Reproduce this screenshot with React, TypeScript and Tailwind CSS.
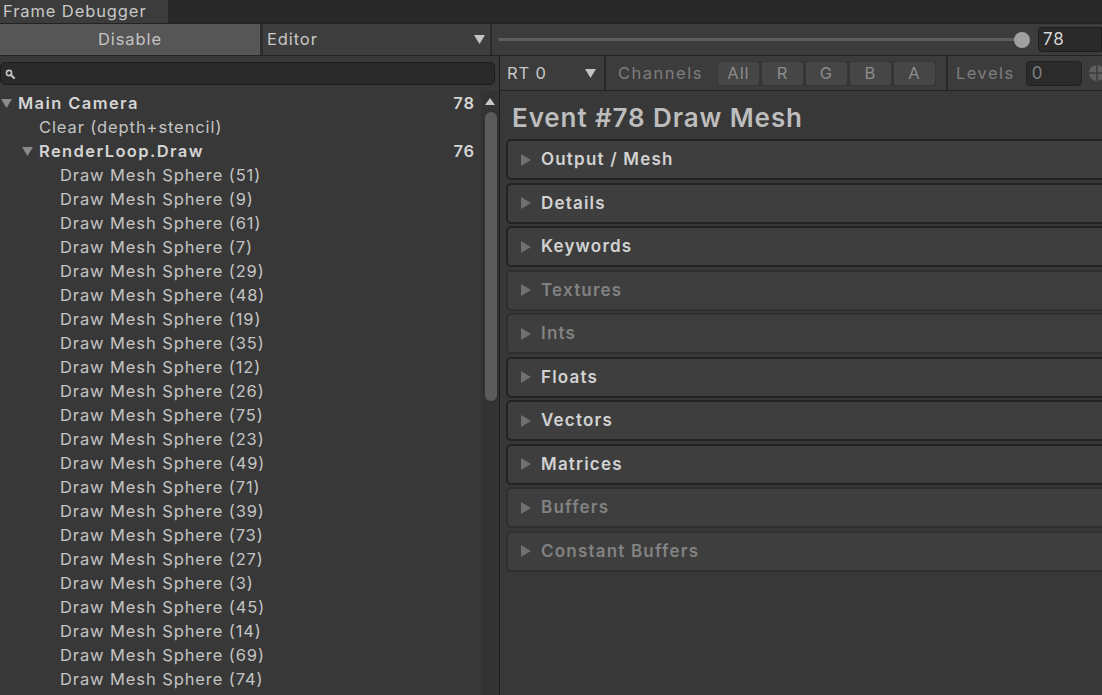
import React from 'react';

const spheres = [51, 9, 61, 7, 29, 48, 19, 35, 12, 26, 75, 23, 49, 71, 39, 73, 27, 3, 45, 14, 69, 74];

const foldouts = [
  { label: 'Output / Mesh', enabled: true },
  { label: 'Details', enabled: true },
  { label: 'Keywords', enabled: true },
  { label: 'Textures', enabled: false },
  { label: 'Ints', enabled: false },
  { label: 'Floats', enabled: true },
  { label: 'Vectors', enabled: true },
  { label: 'Matrices', enabled: true },
  { label: 'Buffers', enabled: false },
  { label: 'Constant Buffers', enabled: false },
];

function DownTri({ className }: { className?: string }) {
  return (
    <svg width="11" height="9" viewBox="0 0 11 9" className={className}>
      <path d="M0 0 H11 L5.5 9 Z" fill="currentColor" />
    </svg>
  );
}

function RightTri({ className }: { className?: string }) {
  return (
    <svg width="10" height="12" viewBox="0 0 10 12" className={className}>
      <path d="M0 0 L10 6 L0 12 Z" fill="currentColor" />
    </svg>
  );
}

function TreeRow({ indent, label, count, bold, open }: { indent: number; label: string; count?: number; bold?: boolean; open?: boolean }) {
  return (
    <div className="h-[24px] flex items-center pr-[6px]">
      <div style={{ width: indent }} className="shrink-0 flex justify-end pr-[6px]">
        {open && <DownTri className="text-[#8a8a8a]" />}
      </div>
      <span className={bold ? 'font-semibold text-[#d4d4d4] tracking-[1.4px]' : 'text-[#c4c4c4]'}>{label}</span>
      {count !== undefined && <span className="ml-auto font-semibold text-[#d4d4d4]">{count}</span>}
    </div>
  );
}

export default function App() {
  return (
    <div className="w-[1102px] h-[695px] bg-[#383838] flex flex-col overflow-hidden font-['Inter',sans-serif] text-[16.5px] tracking-[0.9px] leading-none text-[#c4c4c4]">
      {/* tab strip */}
      <div className="h-[23px] bg-[#282828] flex shrink-0">
        <div className="w-[168px] bg-[#3c3c3c] flex items-center pl-[3px] text-[#c8c8c8]">Frame Debugger</div>
      </div>

      {/* toolbar */}
      <div className="h-[33px] bg-[#3c3c3c] border-t border-b border-[#232323] flex items-stretch shrink-0">
        <div className="w-[263px] bg-[#565656] flex items-center justify-center text-[#c4c4c4] border-r-[3px] border-[#2e2e2e]">Disable</div>
        <div className="w-[229px] bg-[#3e3e3e] flex items-center justify-between pl-[4px] pr-[5px] border-r-2 border-[#2a2a2a]">
          <span className="text-[#c8c8c8]">Editor</span>
          <DownTri className="text-[#c4c4c4]" />
        </div>
        <div className="flex-1 flex items-center pl-[6px] pr-[8px]">
          <div className="flex-1 h-[3px] bg-[#5e5e5e] rounded-full" />
          <div className="w-[16px] h-[16px] rounded-full bg-[#a0a0a0] -ml-[8px]" />
        </div>
        <div className="w-[64px] my-[3px] bg-[#2a2a2a] border border-[#1e1e1e] rounded-l-[4px] flex items-center pl-[4px] text-[#d4d4d4] text-[17px]">78</div>
      </div>

      <div className="flex-1 flex min-h-0">
        {/* left panel */}
        <div className="w-[499px] flex flex-col shrink-0">
          <div className="h-[35px] flex items-center pr-[4px] shrink-0">
            <div className="w-full h-[23px] bg-[#2a2a2a] border border-[#1d1d1d] rounded-[5px] flex items-center pl-[4px]">
              <svg width="10" height="10" viewBox="0 0 10 10">
                <circle cx="4" cy="4" r="2.6" stroke="#c4c4c4" strokeWidth="1.6" fill="none" />
                <path d="M6 6 L9 9" stroke="#c4c4c4" strokeWidth="2" strokeLinecap="round" />
              </svg>
            </div>
          </div>
          <div className="flex-1 flex min-h-0">
            <div className="flex-1 overflow-hidden">
              <TreeRow indent={18} label="Main Camera" count={78} bold open />
              <TreeRow indent={39} label="Clear (depth+stencil)" />
              <TreeRow indent={39} label="RenderLoop.Draw" count={76} bold open />
              {spheres.map((n) => (
                <TreeRow key={n} indent={60} label={`Draw Mesh Sphere (${n})`} />
              ))}
            </div>
            <div className="w-[18px] bg-[#333333] flex flex-col items-center pt-[7px] shrink-0">
              <svg width="10" height="7" viewBox="0 0 10 7">
                <path d="M5 0 L10 7 H0 Z" fill="#c8c8c8" />
              </svg>
              <div className="w-[12px] h-[289px] bg-[#5b5b5b] rounded-full mt-[7px] ml-[2px]" />
            </div>
          </div>
        </div>

        <div className="w-px bg-[#1c1c1c] shrink-0" />

        {/* right panel */}
        <div className="flex-1 flex flex-col overflow-hidden">
          <div className="h-[35px] bg-[#3c3c3c] border-b border-[#232323] flex items-center shrink-0">
            <div className="w-[106px] shrink-0 h-full flex items-center justify-between pl-[7px] pr-[8px] border-r-2 border-[#2a2a2a]">
              <span className="text-[#c8c8c8]">RT 0</span>
              <DownTri className="text-[#c4c4c4]" />
            </div>
            <span className="ml-[12px] shrink-0 text-[#7e7e7e] tracking-[1.5px]">Channels</span>
            <div className="ml-[14px] shrink-0 h-[25px] bg-[#353535] rounded-[3px] flex items-stretch p-px gap-[3px]">
              {['All', 'R', 'G', 'B', 'A'].map((c) => (
                <div key={c} className="w-[41px] bg-[#464646] flex items-center justify-center text-[#8c8c8c] rounded-[2px]">{c}</div>
              ))}
            </div>
            <div className="ml-[10px] shrink-0 w-[2px] h-full bg-[#2a2a2a]" />
            <span className="ml-[8px] shrink-0 text-[#7e7e7e] tracking-[1.5px]">Levels</span>
            <div className="ml-[11px] shrink-0 w-[56px] h-[25px] bg-[#2b2b2b] border border-[#222222] rounded-[4px] flex items-center pl-[5px] text-[#7e7e7e] text-[17px]">0</div>
            <svg width="20" height="20" viewBox="0 0 20 20" className="ml-[5px] shrink-0">
              <circle cx="10" cy="10" r="8" fill="#5e5e5e" />
              <path d="M10 2 V18 M2 10 H18" stroke="#3c3c3c" strokeWidth="1.5" />
            </svg>
          </div>

          <div className="flex-1 pl-[6px] -mr-[12px] pt-[12px]">
            <div className="pl-[6px] text-[26px] font-semibold text-[#bdbdbd] tracking-[0.9px] h-[36px] leading-[30px]">Event #78 Draw Mesh</div>
            <div className="flex flex-col gap-[2.5px]">
              {foldouts.map((f) => (
                <div
                  key={f.label}
                  className={`h-[41px] bg-[#3e3e3e] border-2 rounded-[5px] flex items-center pl-[13px] ${f.enabled ? 'border-[#232323]' : 'border-[#2f2f2f]'}`}
                >
                  <RightTri className="text-[#707070]" />
                  <span className={`ml-[10px] font-semibold text-[17px] tracking-[1.2px] ${f.enabled ? 'text-[#d2d2d2]' : 'text-[#828282]'}`}>{f.label}</span>
                </div>
              ))}
            </div>
          </div>
        </div>
      </div>
    </div>
  );
}
